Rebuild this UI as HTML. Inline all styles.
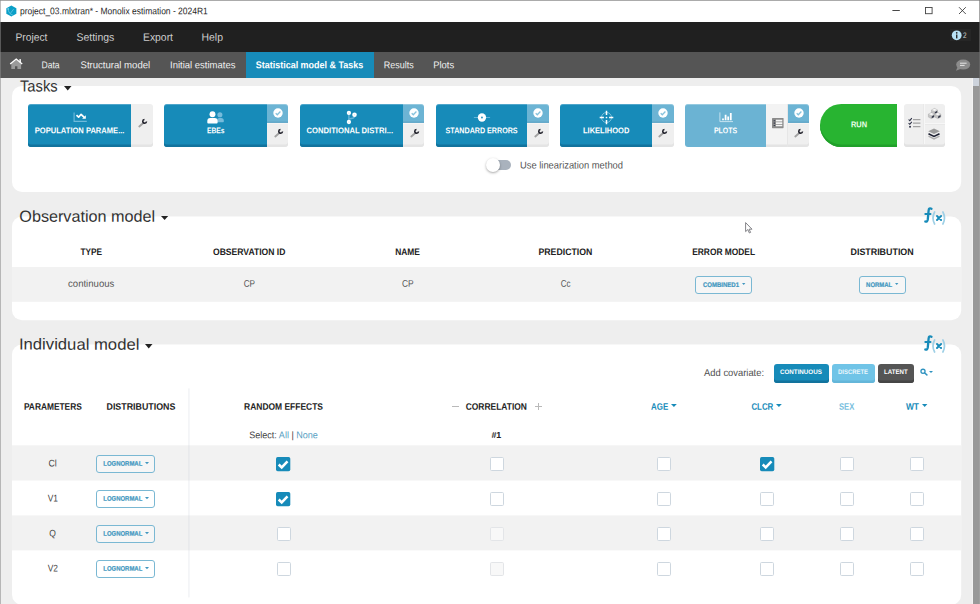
<!DOCTYPE html>
<html lang="en">
<head>
<meta charset="utf-8">
<title>project_03.mlxtran* - Monolix estimation - 2024R1</title>
<style>
*{box-sizing:border-box;margin:0;padding:0}
html,body{width:980px;height:604px;overflow:hidden;background:#eee;font-family:"Liberation Sans",sans-serif}
#app{position:relative;width:980px;height:604px;overflow:hidden;background:#eee}
#app>*{position:absolute}
.t{position:absolute;left:0;top:0;white-space:nowrap;transform-origin:0 0;display:block;line-height:1.2}
.p{display:inline-block;width:0;height:0}
/* window chrome */
.titlebar{left:0;top:0;width:980px;height:22px;background:#fff;border-top:1px solid #ababab}
.menubar{left:0;top:22px;width:980px;height:30px;background:#202020}
.tabbar{left:0;top:52px;width:980px;height:26px;background:#555}
.tab-active{left:246px;top:52px;width:128px;height:26px;background:#178bb9}
.edge-l{left:0;top:0;width:1px;height:604px;background:rgba(136,136,136,.55)}
.edge-r{left:979px;top:0;width:1px;height:604px;background:rgba(110,110,110,.6)}
.sb-top{left:973px;top:78px;width:6px;height:8px;background:#cdd3dc}
.sb-thumb{left:973px;top:86px;width:6px;height:518px;background:#999}
/* cards */
/* task buttons */
.tb{top:104px;height:42.7px;border-radius:3px 0 0 3px;background:#178bb9;box-shadow:inset 0 -2.5px 0 #12739d;border-top:1px solid #4fa6cb}
.side{background:#efefef;box-shadow:inset 0 -2.4px 0 #e4e4e4}
.side.lo{border-top:1px solid #f7f5f4}
.chk{background:#6cb4d4;box-shadow:inset 0 -1.8px 0 #66aaca;border-top:1px solid #93c8df}
.ic{overflow:visible}
.dd{border:1px solid #7ab8d3;border-radius:3px;background:rgba(255,255,255,.35)}
.cb{width:14px;height:14px;border:1px solid #ced7df;border-radius:1.6px;background:#fff}
.cb.on{background:#178bb9;border-color:#178bb9}
.cb.off{border-color:#e3e5e8;background:#f8f8f8}
</style>
</head>
<body>
<div id="app">
  <!-- window chrome -->
  <div class="titlebar"></div>
  <div class="menubar"></div>
  <div class="tabbar"></div>
  <div class="tab-active"></div>

  <!-- app logo -->
  <svg class="ic" style="left:5.8px;top:4.7px" width="10.7" height="12" viewBox="0 0 23 25">
    <polygon points="11.5,0.5 22.3,6.5 22.3,18.5 11.5,24.5 0.7,18.5 0.7,6.5" fill="#0a9fc7"/>
    <path d="M4.5 8 C5 15 8 19 14 21 M9.5 17.5 L16 9" stroke="#8fd8ee" stroke-width="1.2" fill="none" stroke-linecap="round"/><circle cx="4.6" cy="8" r="1.5" fill="#b5e8f6"/>
  </svg>
  <!-- window controls -->
  <svg class="ic" style="left:888px;top:4px" width="84" height="14" viewBox="0 0 84 14">
    <path d="M4.4 6.5 H11.8" stroke="#333" stroke-width="0.9"/>
    <rect x="37.5" y="3.5" width="6.6" height="6.2" fill="none" stroke="#444" stroke-width="0.9"/>
    <path d="M71 3.2 L77.8 10 M77.8 3.2 L71 10" stroke="#333" stroke-width="0.85"/>
  </svg>
  <!-- info badge -->
  <div style="left:950px;top:29px;width:21px;height:12px;background:#262626"></div>
  <svg class="ic" style="left:951px;top:30px" width="12" height="12" viewBox="0 0 12 12">
    <circle cx="5.7" cy="5.3" r="4.9" fill="#b9e2f5"/>
    <rect x="5.05" y="4.5" width="1.35" height="3.9" fill="#222"/><circle cx="5.72" cy="2.8" r="0.85" fill="#222"/>
  </svg>
  <!-- home -->
  <svg class="ic" style="left:9px;top:58.4px" width="15" height="12" viewBox="0 0 15 12">
    <path d="M2.3 5.6 L7.2 1.6 L12.1 5.6 V11.1 H8.4 V8.2 H6 V11.1 H2.3 Z" fill="#9a9a9a"/>
    <path d="M1.2 6 L7.2 1.1 L13.2 6" stroke="#fff" stroke-width="1.35" fill="none" stroke-linejoin="miter"/>
    <rect x="10.4" y="1.1" width="1.5" height="3.2" fill="#fff"/>
  </svg>
  <!-- chat bubble -->
  <svg class="ic" style="left:955px;top:59px" width="16" height="13" viewBox="0 0 16 13">
    <ellipse cx="8.2" cy="5.6" rx="7" ry="5" fill="#8c8c8c"/>
    <path d="M2.5 8 L1 11.8 L6 9.8 Z" fill="#8c8c8c"/>
    <path d="M5 4.2 H11.6" stroke="#e6e6e6" stroke-width="1"/><path d="M5 6.4 H9.6" stroke="#e6e6e6" stroke-width="1"/>
  </svg>

  <!-- cards + striped rows -->
  <svg class="ic" style="left:0;top:0" width="980" height="604" viewBox="0 0 980 604">
    <rect x="12" y="85.9" width="949.2" height="106" rx="10" fill="#fff"/>
    <rect x="12" y="216.5" width="949.2" height="103.8" rx="10" fill="#fff"/>
    <rect x="12" y="344.5" width="949.2" height="260.3" rx="10" fill="#fff"/>
    <rect x="12" y="267" width="949.2" height="34.8" fill="#f2f2f2"/>
    <rect x="12" y="445.3" width="949.2" height="35.2" fill="#f2f2f2"/>
    <rect x="12" y="515.4" width="949.2" height="35" fill="#f2f2f2"/>
    <rect x="188.1" y="388.4" width="1.6" height="209" fill="#c8ccd6" fill-opacity="0.22"/>
  </svg>

  <!-- section carets -->

  <!-- TASK 1: population parameters -->
  <div class="tb" style="left:28px;width:103px"></div>
  <div class="side" style="left:131px;top:104px;width:22px;height:42.6px;border-radius:0 3px 3px 0"></div>
  <svg class="ic" style="left:73px;top:112px" width="15" height="11" viewBox="0 0 15 11">
    <path d="M1.1 0.6 V9.4 H13.8" stroke="#6fbadb" stroke-width="1.1" fill="none"/>
    <path d="M3.5 3.2 L5.6 5.2 L8.1 2.3 L11.2 5.4" stroke="#fff" stroke-width="1.7" fill="none" stroke-linejoin="round"/>
    <path d="M12.8 3.2 V6.8 H9.1 Z" fill="#fff"/>
  </svg>
  <svg class="ic wr" style="left:136.8px;top:118.2px" width="10" height="9" viewBox="0 0 10 9"><path d="M2.3 8.5 L6.6 4.8" stroke="#a2a2a2" stroke-width="1.9" stroke-linecap="round"/> <path d="M9.54 3.47 A1.9 1.9 0 1 1 7.48 1.41" stroke="#1c1c26" stroke-width="1.5" fill="none"/></svg>

  <!-- TASK 2: EBEs -->
  <div class="tb" style="left:164.2px;width:103.1px"></div>
  <div class="chk" style="left:267.3px;top:104px;width:20.5px;height:19px;border-radius:0 3px 0 0"></div>
  <div class="side lo" style="left:267.3px;top:123px;width:20.5px;height:23.6px;border-radius:0 0 3px 0"></div>
  <svg class="ic" style="left:207px;top:111px" width="18" height="13" viewBox="0 0 18 13">
    <circle cx="12.9" cy="3.7" r="2.55" fill="#76bbdb"/><path d="M10 11.2 V9.4 Q10 7.1 12.2 7.1 H14.2 Q16.8 7.1 16.8 9.6 V10.4 Q16.8 11.2 16 11.2 Z" fill="#76bbdb"/>
    <circle cx="5.5" cy="3.3" r="2.95" fill="#fff"/><path d="M0.3 11.6 V10 Q0.3 7.1 3.2 7.1 H7.8 Q10.6 7.1 10.6 10 V11.6 Q10.6 12.5 9.7 12.5 H1.2 Q0.3 12.5 0.3 11.6 Z" fill="#fff"/>
  </svg>
  <svg class="ic" style="left:273px;top:108.2px" width="10" height="10" viewBox="0 0 10 10"><circle cx="5" cy="5" r="4.7" fill="#fff"/> <path d="M2.7 5.2 L4.3 6.8 L7.4 3.5" stroke="#86c2dc" stroke-width="1.25" fill="none"/></svg>
  <svg class="ic wr" style="left:272.8px;top:127.7px" width="10" height="9" viewBox="0 0 10 9"><path d="M2.3 8.5 L6.6 4.8" stroke="#a2a2a2" stroke-width="1.9" stroke-linecap="round"/> <path d="M9.54 3.47 A1.9 1.9 0 1 1 7.48 1.41" stroke="#1c1c26" stroke-width="1.5" fill="none"/></svg>

  <!-- TASK 3: conditional distribution -->
  <div class="tb" style="left:299.8px;width:103.5px"></div>
  <div class="chk" style="left:403.3px;top:104px;width:20.5px;height:19px;border-radius:0 3px 0 0"></div>
  <div class="side lo" style="left:403.3px;top:123px;width:20.5px;height:23.6px;border-radius:0 0 3px 0"></div>
  <svg class="ic" style="left:345px;top:110px" width="13" height="15" viewBox="0 0 13 15">
    <path d="M3.9 3 V12 M9.5 4.8 V6.4 Q9.3 8.6 3.9 8.9" stroke="#62b4d7" stroke-width="1.5" fill="none"/>
    <circle cx="3.9" cy="2.9" r="2.15" fill="#fff"/><circle cx="9.5" cy="4.7" r="2.3" fill="#fff"/><circle cx="3.9" cy="12" r="2.15" fill="#fff"/>
    <circle cx="3.9" cy="2.9" r="0.5" fill="#c4e0ee"/><circle cx="9.5" cy="4.7" r="0.5" fill="#c4e0ee"/><circle cx="3.9" cy="12" r="0.5" fill="#c4e0ee"/>
  </svg>
  <svg class="ic" style="left:409px;top:108.2px" width="10" height="10" viewBox="0 0 10 10"><circle cx="5" cy="5" r="4.7" fill="#fff"/> <path d="M2.7 5.2 L4.3 6.8 L7.4 3.5" stroke="#86c2dc" stroke-width="1.25" fill="none"/></svg>
  <svg class="ic wr" style="left:408.8px;top:127.7px" width="10" height="9" viewBox="0 0 10 9"><path d="M2.3 8.5 L6.6 4.8" stroke="#a2a2a2" stroke-width="1.9" stroke-linecap="round"/> <path d="M9.54 3.47 A1.9 1.9 0 1 1 7.48 1.41" stroke="#1c1c26" stroke-width="1.5" fill="none"/></svg>

  <!-- TASK 4: standard errors -->
  <div class="tb" style="left:435.8px;width:91.5px"></div>
  <div class="chk" style="left:527.3px;top:104px;width:21.4px;height:19px;border-radius:0 3px 0 0"></div>
  <div class="side lo" style="left:527.3px;top:123px;width:21.4px;height:23.6px;border-radius:0 0 3px 0"></div>
  <svg class="ic" style="left:473px;top:113px" width="18" height="9" viewBox="0 0 18 9">
    <path d="M0.9 4.5 H17.1" stroke="#60b3d6" stroke-width="1"/>
    <circle cx="8.95" cy="4.5" r="4.15" fill="#fff"/><circle cx="8.95" cy="4.5" r="1" fill="#2f97c3"/>
  </svg>
  <svg class="ic" style="left:533px;top:108.2px" width="10" height="10" viewBox="0 0 10 10"><circle cx="5" cy="5" r="4.7" fill="#fff"/> <path d="M2.7 5.2 L4.3 6.8 L7.4 3.5" stroke="#86c2dc" stroke-width="1.25" fill="none"/></svg>
  <svg class="ic wr" style="left:532.8px;top:127.7px" width="10" height="9" viewBox="0 0 10 9"><path d="M2.3 8.5 L6.6 4.8" stroke="#a2a2a2" stroke-width="1.9" stroke-linecap="round"/> <path d="M9.54 3.47 A1.9 1.9 0 1 1 7.48 1.41" stroke="#1c1c26" stroke-width="1.5" fill="none"/></svg>

  <!-- TASK 5: likelihood -->
  <div class="tb" style="left:560.1px;width:91.9px"></div>
  <div class="chk" style="left:652px;top:104px;width:21.5px;height:19px;border-radius:0 3px 0 0"></div>
  <div class="side lo" style="left:652px;top:123px;width:21.5px;height:23.6px;border-radius:0 0 3px 0"></div>
  <svg class="ic" style="left:599px;top:110px" width="15" height="15" viewBox="0 0 15 15">
    <circle cx="7.5" cy="7.5" r="5" fill="none" stroke="#7cc0dc" stroke-width="1"/>
    <path d="M7.5 0.7 V4.9 M7.5 10.1 V14.3 M0.7 7.5 H4.9 M10.1 7.5 H14.3" stroke="#fff" stroke-width="1.5"/>
    <circle cx="7.5" cy="7.5" r="0.85" fill="#fff"/>
  </svg>
  <svg class="ic" style="left:658px;top:108.2px" width="10" height="10" viewBox="0 0 10 10"><circle cx="5" cy="5" r="4.7" fill="#fff"/> <path d="M2.7 5.2 L4.3 6.8 L7.4 3.5" stroke="#86c2dc" stroke-width="1.25" fill="none"/></svg>
  <svg class="ic wr" style="left:657.3px;top:127.7px" width="10" height="9" viewBox="0 0 10 9"><path d="M2.3 8.5 L6.6 4.8" stroke="#a2a2a2" stroke-width="1.9" stroke-linecap="round"/> <path d="M9.54 3.47 A1.9 1.9 0 1 1 7.48 1.41" stroke="#1c1c26" stroke-width="1.5" fill="none"/></svg>

  <!-- TASK 6: plots -->
  <div class="tb" style="left:684.8px;width:81.5px;background:#6bb3d3;box-shadow:none;border-top-color:#95cae0"></div>
  <div class="side" style="left:766.3px;top:104px;width:21.5px;height:42.6px;background:#f3f3f3;border-right:1px solid #e6e6e6"></div>
  <div class="chk" style="left:788px;top:104px;width:20.5px;height:19px;border-radius:0 3px 0 0"></div>
  <div class="side lo" style="left:788px;top:123px;width:20.5px;height:23.6px;border-radius:0 0 3px 0"></div>
  <svg class="ic" style="left:719px;top:112px" width="15" height="11" viewBox="0 0 15 11">
    <path d="M0.9 0.4 V9.6 H14" stroke="#cfe8f3" stroke-width="0.9" fill="none"/>
    <path d="M4 6.5 V8.2 M6.6 2.8 V8.2 M9.2 4.4 V8.2 M11.8 1 V8.2" stroke="#fff" stroke-width="1.75"/>
  </svg>
  <svg class="ic" style="left:771.6px;top:117.9px" width="11.6" height="10.2" viewBox="0 0 11.6 10.2">
    <rect x="0" y="0" width="11.6" height="10.2" rx="0.6" fill="#8b8b8b"/>
    <path d="M4 2.7 H10.3 M4 5.1 H10.3 M4 7.5 H10.3" stroke="#f6f6f6" stroke-width="1.7"/>
    <path d="M1.7 2.7 H2.9 M1.7 5.1 H2.9 M1.7 7.5 H2.9" stroke="#2c3045" stroke-width="1.1"/>
  </svg>
  <svg class="ic" style="left:793.5px;top:108.2px" width="10" height="10" viewBox="0 0 10 10"><circle cx="5" cy="5" r="4.7" fill="#fff"/> <path d="M2.7 5.2 L4.3 6.8 L7.4 3.5" stroke="#86c2dc" stroke-width="1.25" fill="none"/></svg>
  <svg class="ic wr" style="left:793.3px;top:127.7px" width="10" height="9" viewBox="0 0 10 9"><path d="M2.3 8.5 L6.6 4.8" stroke="#a2a2a2" stroke-width="1.9" stroke-linecap="round"/> <path d="M9.54 3.47 A1.9 1.9 0 1 1 7.48 1.41" stroke="#1c1c26" stroke-width="1.5" fill="none"/></svg>

  <!-- RUN -->
  <div style="left:820px;top:104px;width:77px;height:42.6px;border-radius:21.3px 0 0 21.3px;background:#28b431;box-shadow:inset 0 -2.6px 0 #20a02a"></div>
  <!-- right tools -->
  <div class="side" style="left:904px;top:104px;width:41.2px;height:42.7px;border-radius:3px;box-shadow:inset 0 -2.5px 0 #e2e2e2"></div>
  <div style="left:923.5px;top:104px;width:1px;height:40.3px;background:#f7f7f7;border-right:0"></div>
  <div style="left:922.7px;top:104px;width:0.8px;height:40.3px;background:#e9e9e9"></div>
  <div style="left:924.5px;top:123.2px;width:20.7px;height:1px;background:#f7f7f7"></div>
  <div style="left:924.5px;top:124.2px;width:20.7px;height:0.8px;background:#e9e9e9"></div>
  <svg class="ic" style="left:907.5px;top:117px" width="13" height="12" viewBox="0 0 13 12">
    <path d="M5 2.6 H12.4 M5 6.2 H12.4 M5 9.7 H12.4" stroke="#a2a2a2" stroke-width="1.2"/>
    <path d="M0.6 2.5 L1.8 3.7 L3.8 1.2 M0.6 6.1 L1.8 7.3 L3.8 4.8" stroke="#2c3045" stroke-width="1.05" fill="none"/><rect x="1.2" y="8.9" width="1.7" height="1.7" fill="#2c3045"/>
  </svg>
  <svg class="ic" style="left:928px;top:107.5px" width="13" height="11" viewBox="0 0 13 11">
    <path d="M6.50 0.40 L9.50 1.90 L9.50 4.90 L6.50 6.40 L3.50 4.90 L3.50 1.90 Z" fill="#c4c4c4" stroke="#a9a9a9" stroke-width="0.5"/><path d="M6.50 0.70 L9.10 1.90 L6.50 3.10 L3.90 1.90 Z" fill="#f7f7f7"/><path d="M6.80 4.30 L9.20 2.80 L9.20 4.70 L6.80 6.00 Z" fill="#343849"/>
    <path d="M3.40 4.60 L6.40 6.10 L6.40 9.10 L3.40 10.60 L0.40 9.10 L0.40 6.10 Z" fill="#c4c4c4" stroke="#a9a9a9" stroke-width="0.5"/><path d="M3.40 4.90 L6.00 6.10 L3.40 7.30 L0.80 6.10 Z" fill="#f7f7f7"/><path d="M3.70 8.50 L6.10 7.00 L6.10 8.90 L3.70 10.20 Z" fill="#343849"/>
    <path d="M9.80 4.60 L12.80 6.10 L12.80 9.10 L9.80 10.60 L6.80 9.10 L6.80 6.10 Z" fill="#c4c4c4" stroke="#a9a9a9" stroke-width="0.5"/><path d="M9.80 4.90 L12.40 6.10 L9.80 7.30 L7.20 6.10 Z" fill="#f7f7f7"/><path d="M10.10 8.50 L12.50 7.00 L12.50 8.90 L10.10 10.20 Z" fill="#343849"/>
  </svg>
  <svg class="ic" style="left:928.3px;top:128px" width="12" height="12" viewBox="0 0 12 12">
    <path d="M0.5 8.2 L6 10.9 L11.5 8.2" stroke="#aeaeae" stroke-width="1.5" fill="none"/>
    <path d="M0.5 5.7 L6 8.4 L11.5 5.7" stroke="#1f2233" stroke-width="1.7" fill="none"/>
    <path d="M6 0.5 L11.8 3.2 L6 5.9 L0.2 3.2 Z" fill="#9b9b9b"/>
  </svg>

  <!-- toggle -->
  <div style="left:487.5px;top:160.3px;width:23.5px;height:9.6px;border-radius:5px;background:#a9b2bd"></div>
  <div style="left:485.5px;top:157.8px;width:14px;height:14px;border-radius:50%;background:#fff;box-shadow:0 1px 2.5px rgba(0,0,0,.35)"></div>

  <!-- observation model -->
  <div class="dd" style="left:695.3px;top:275.6px;width:57px;height:18px"></div>
  <div class="dd" style="left:859px;top:275.6px;width:46.6px;height:18px"></div>
  <svg class="ic" style="left:924px;top:207px" width="23" height="18" viewBox="0 0 23 18"><path d="M7.5 1.7 Q4.9 0.4 4.6 3.6 L3.8 12.4 Q3.4 15.2 1.3 14.5" stroke="#178bb9" stroke-width="2.3" fill="none" stroke-linecap="round"/> <path d="M1.3 6.9 H6.5" stroke="#178bb9" stroke-width="2" stroke-linecap="round"/> <path d="M10.6 5 Q7.4 11 10.6 17 M18.9 5 Q22.1 11 18.9 17" stroke="#9fd0e6" stroke-width="1.7" fill="none" stroke-linecap="round"/> <path d="M13 9 L17.1 13 M17.1 9 L13 13" stroke="#178bb9" stroke-width="1.9" stroke-linecap="round"/></svg>
  <!-- mouse cursor -->
  <svg class="ic" style="left:745px;top:222px" width="8" height="12" viewBox="0 0 8 12">
    <path d="M0.6 0.6 V9.6 L2.8 7.6 L4.4 11 L5.6 10.4 L4.1 7.2 H7 Z" fill="#fff" stroke="#6e6e74" stroke-width="0.85" stroke-linejoin="round"/>
  </svg>

  <!-- individual model -->
    <svg class="ic" style="left:924px;top:335px" width="23" height="18" viewBox="0 0 23 18"><path d="M7.5 1.7 Q4.9 0.4 4.6 3.6 L3.8 12.4 Q3.4 15.2 1.3 14.5" stroke="#178bb9" stroke-width="2.3" fill="none" stroke-linecap="round"/> <path d="M1.3 6.9 H6.5" stroke="#178bb9" stroke-width="2" stroke-linecap="round"/> <path d="M10.6 5 Q7.4 11 10.6 17 M18.9 5 Q22.1 11 18.9 17" stroke="#9fd0e6" stroke-width="1.7" fill="none" stroke-linecap="round"/> <path d="M13 9 L17.1 13 M17.1 9 L13 13" stroke="#178bb9" stroke-width="1.9" stroke-linecap="round"/></svg>

  <!-- covariate buttons -->
  <div style="left:774px;top:364px;width:55px;height:19px;border-radius:3px;background:#178bb9;box-shadow:inset 0 -2.6px 0 #12739d"></div>
  <div style="left:832px;top:364px;width:43.2px;height:19px;border-radius:3px;background:#70c4e7;box-shadow:inset 0 -2.6px 0 #64b6d9"></div>
  <div style="left:878px;top:364px;width:36.1px;height:19px;border-radius:3px;background:#555;box-shadow:inset 0 -2.6px 0 #454545"></div>
  <svg class="ic" style="left:919.5px;top:368px" width="9" height="9" viewBox="0 0 9 9">
    <circle cx="3" cy="3.3" r="2.05" fill="none" stroke="#2f93c0" stroke-width="1.3"/><path d="M4.7 5 L6.9 6.9" stroke="#2f93c0" stroke-width="1.5" stroke-linecap="round"/>
  </svg>
  <!-- header controls -->
  <div style="left:451.5px;top:405.7px;width:7px;height:1px;background:#b9b9b9"></div>
  <div style="left:535px;top:405.7px;width:6.6px;height:1px;background:#b9b9b9"></div>
  <div style="left:537.8px;top:403px;width:1px;height:6.6px;background:#b9b9b9"></div>

  <!-- rows: distribution dropdowns + checkboxes -->
  <div class="dd" style="left:96.3px;top:455.1px;width:59.1px;height:17.6px"></div>
  <svg class="ic" style="left:276.4px;top:456.7px" width="14.3" height="14.3" viewBox="0 0 14.3 14.3"><rect x="0" y="0" width="14.3" height="14.3" rx="1.7" fill="#178bb9"/><path d="M2.7 7.5 L5.7 10.4 L11.5 4.3" stroke="#fff" stroke-width="2.5" fill="none"/></svg>
  <div class="cb" style="left:489.8px;top:456.8px"></div>
  <div class="cb" style="left:656.8px;top:456.8px"></div>
  <svg class="ic" style="left:759.7px;top:456.7px" width="14.3" height="14.3" viewBox="0 0 14.3 14.3"><rect x="0" y="0" width="14.3" height="14.3" rx="1.7" fill="#178bb9"/><path d="M2.7 7.5 L5.7 10.4 L11.5 4.3" stroke="#fff" stroke-width="2.5" fill="none"/></svg>
  <div class="cb" style="left:839.7px;top:456.8px"></div>
  <div class="cb" style="left:910.0px;top:456.8px"></div>
  <div class="dd" style="left:96.3px;top:490.1px;width:59.1px;height:17.6px"></div>
  <svg class="ic" style="left:276.4px;top:491.7px" width="14.3" height="14.3" viewBox="0 0 14.3 14.3"><rect x="0" y="0" width="14.3" height="14.3" rx="1.7" fill="#178bb9"/><path d="M2.7 7.5 L5.7 10.4 L11.5 4.3" stroke="#fff" stroke-width="2.5" fill="none"/></svg>
  <div class="cb" style="left:489.8px;top:491.8px"></div>
  <div class="cb" style="left:656.8px;top:491.8px"></div>
  <div class="cb" style="left:759.8px;top:491.8px"></div>
  <div class="cb" style="left:839.7px;top:491.8px"></div>
  <div class="cb" style="left:910.0px;top:491.8px"></div>
  <div class="dd" style="left:96.3px;top:525.1px;width:59.1px;height:17.6px"></div>
  <div class="cb" style="left:276.5px;top:526.8px"></div>
  <div class="cb off" style="left:489.8px;top:526.8px"></div>
  <div class="cb" style="left:656.8px;top:526.8px"></div>
  <div class="cb" style="left:759.8px;top:526.8px"></div>
  <div class="cb" style="left:839.7px;top:526.8px"></div>
  <div class="cb" style="left:910.0px;top:526.8px"></div>
  <div class="dd" style="left:96.3px;top:560.1px;width:59.1px;height:17.6px"></div>
  <div class="cb" style="left:276.5px;top:561.8px"></div>
  <div class="cb off" style="left:489.8px;top:561.8px"></div>
  <div class="cb" style="left:656.8px;top:561.8px"></div>
  <div class="cb" style="left:759.8px;top:561.8px"></div>
  <div class="cb" style="left:839.7px;top:561.8px"></div>
  <div class="cb" style="left:910.0px;top:561.8px"></div>
  <svg class="ic" style="left:63.50px;top:85.60px" width="7.50" height="4.40" viewBox="0 0 7.50 4.40"><polygon points="0,0 7.50,0 3.75,4.40" fill="#222"/></svg>
  <svg class="ic" style="left:160.50px;top:215.80px" width="7.20" height="4.10" viewBox="0 0 7.20 4.10"><polygon points="0,0 7.20,0 3.60,4.10" fill="#222"/></svg>
  <svg class="ic" style="left:144.50px;top:343.60px" width="7.50" height="4.40" viewBox="0 0 7.50 4.40"><polygon points="0,0 7.50,0 3.75,4.40" fill="#222"/></svg>
  <svg class="ic" style="left:741.80px;top:283.00px" width="3.40" height="1.90" viewBox="0 0 3.40 1.90"><polygon points="0,0 3.40,0 1.70,1.90" fill="#4297c0"/></svg>
  <svg class="ic" style="left:894.80px;top:283.00px" width="3.40" height="1.90" viewBox="0 0 3.40 1.90"><polygon points="0,0 3.40,0 1.70,1.90" fill="#4297c0"/></svg>
  <svg class="ic" style="left:670.80px;top:404.20px" width="5.80" height="3.10" viewBox="0 0 5.80 3.10"><polygon points="0,0 5.80,0 2.90,3.10" fill="#178bb9"/></svg>
  <svg class="ic" style="left:776.00px;top:404.20px" width="5.80" height="3.10" viewBox="0 0 5.80 3.10"><polygon points="0,0 5.80,0 2.90,3.10" fill="#178bb9"/></svg>
  <svg class="ic" style="left:922.10px;top:404.20px" width="5.40" height="3.10" viewBox="0 0 5.40 3.10"><polygon points="0,0 5.40,0 2.70,3.10" fill="#178bb9"/></svg>
  <svg class="ic" style="left:929.00px;top:370.90px" width="4.00" height="2.10" viewBox="0 0 4.00 2.10"><polygon points="0,0 4.00,0 2.00,2.10" fill="#2f93c0"/></svg>
  <svg class="ic" style="left:144.80px;top:462.10px" width="4.00" height="2.20" viewBox="0 0 4.00 2.20"><polygon points="0,0 4.00,0 2.00,2.20" fill="#4297c0"/></svg>
  <svg class="ic" style="left:144.80px;top:497.10px" width="4.00" height="2.20" viewBox="0 0 4.00 2.20"><polygon points="0,0 4.00,0 2.00,2.20" fill="#4297c0"/></svg>
  <svg class="ic" style="left:144.80px;top:532.10px" width="4.00" height="2.20" viewBox="0 0 4.00 2.20"><polygon points="0,0 4.00,0 2.00,2.20" fill="#4297c0"/></svg>
  <svg class="ic" style="left:144.80px;top:567.10px" width="4.00" height="2.20" viewBox="0 0 4.00 2.20"><polygon points="0,0 4.00,0 2.00,2.20" fill="#4297c0"/></svg>

  <div style="left:972px;top:78px;width:1px;height:526px;background:#f4f4f4"></div>
  <div class="sb-top"></div>
  <div class="sb-thumb"></div>
  <div class="edge-l"></div>
  <div class="edge-r"></div>

  <span class="t" id="t0" style="font-size:9.50px;font-weight:400;color:#262626;transform:matrix(0.8912,0.00055,-0.00055,1,20.00,5.20)">project_03.mlxtran* - Monolix estimation - 2024R1</span>
  <span class="t" id="t1" style="font-size:10.70px;font-weight:400;color:#cdcdcd;transform:matrix(0.9612,0.00055,-0.00055,1,15.50,30.80)">Project</span>
  <span class="t" id="t2" style="font-size:10.70px;font-weight:400;color:#cdcdcd;transform:matrix(0.9798,0.00055,-0.00055,1,76.50,30.80)">Settings</span>
  <span class="t" id="t3" style="font-size:10.70px;font-weight:400;color:#cdcdcd;transform:matrix(0.9703,0.00055,-0.00055,1,143.00,30.80)">Export</span>
  <span class="t" id="t4" style="font-size:10.70px;font-weight:400;color:#cdcdcd;transform:matrix(0.9757,0.00055,-0.00055,1,201.50,30.80)">Help</span>
  <span class="t" id="t5" style="font-size:9.90px;font-weight:400;color:#f0f0f0;transform:matrix(0.8658,0.00055,-0.00055,1,41.50,59.20)">Data</span>
  <span class="t" id="t6" style="font-size:9.90px;font-weight:400;color:#f0f0f0;transform:matrix(0.9693,0.00055,-0.00055,1,80.50,59.20)">Structural model</span>
  <span class="t" id="t7" style="font-size:9.90px;font-weight:400;color:#f0f0f0;transform:matrix(0.9616,0.00055,-0.00055,1,170.00,59.20)">Initial estimates</span>
  <span class="t" id="t8" style="font-size:9.90px;font-weight:700;color:#fff;transform:matrix(0.9086,0.00055,-0.00055,1,255.75,59.20)">Statistical model &amp; Tasks</span>
  <span class="t" id="t9" style="font-size:9.90px;font-weight:400;color:#f0f0f0;transform:matrix(0.9094,0.00055,-0.00055,1,383.75,59.20)">Results</span>
  <span class="t" id="t10" style="font-size:9.90px;font-weight:400;color:#f0f0f0;transform:matrix(0.9538,0.00055,-0.00055,1,433.25,59.20)">Plots</span>
  <span class="t" id="t11" style="font-size:16.00px;font-weight:400;color:#333;transform:matrix(0.9194,0.00055,-0.00055,1,20.00,76.60)">Tasks</span>
  <span class="t" id="t12" style="font-size:16.00px;font-weight:400;color:#333;transform:matrix(1.0117,0.00055,-0.00055,1,19.30,206.80)">Observation model</span>
  <span class="t" id="t13" style="font-size:16.00px;font-weight:400;color:#333;transform:matrix(1.0415,0.00055,-0.00055,1,18.96,334.60)">Individual model</span>
  <span class="t" id="t14" style="font-size:8.20px;font-weight:700;color:#fff;transform:matrix(0.9239,0.00055,-0.00055,1,34.80,126.25)">POPULATION PARAME...</span>
  <span class="t" id="t15" style="font-size:8.20px;font-weight:700;color:#fff;transform:matrix(0.8244,0.00055,-0.00055,1,207.00,126.25)">EBEs</span>
  <span class="t" id="t16" style="font-size:8.20px;font-weight:700;color:#fff;transform:matrix(0.9339,0.00055,-0.00055,1,306.50,126.25)">CONDITIONAL DISTRI...</span>
  <span class="t" id="t17" style="font-size:8.20px;font-weight:700;color:#fff;transform:matrix(0.8717,0.00055,-0.00055,1,445.60,126.25)">STANDARD ERRORS</span>
  <span class="t" id="t18" style="font-size:8.20px;font-weight:700;color:#fff;transform:matrix(0.9174,0.00055,-0.00055,1,583.00,126.25)">LIKELIHOOD</span>
  <span class="t" id="t19" style="font-size:8.20px;font-weight:700;color:#fff;transform:matrix(0.8444,0.00055,-0.00055,1,714.00,126.25)">PLOTS</span>
  <span class="t" id="t20" style="font-size:8.40px;font-weight:700;color:#eaffea;transform:matrix(0.8897,0.00055,-0.00055,1,850.90,119.30)">RUN</span>
  <span class="t" id="t21" style="font-size:10.00px;font-weight:400;color:#555;transform:matrix(0.9361,0.00055,-0.00055,1,520.00,159.50)">Use linearization method</span>
  <span class="t" id="t22" style="font-size:9.40px;font-weight:700;color:#222;transform:matrix(0.8831,0.00055,-0.00055,1,80.50,246.00)">TYPE</span>
  <span class="t" id="t23" style="font-size:9.40px;font-weight:700;color:#222;transform:matrix(0.9143,0.00055,-0.00055,1,213.00,246.00)">OBSERVATION ID</span>
  <span class="t" id="t24" style="font-size:9.40px;font-weight:700;color:#222;transform:matrix(0.8958,0.00055,-0.00055,1,395.20,246.00)">NAME</span>
  <span class="t" id="t25" style="font-size:9.40px;font-weight:700;color:#222;transform:matrix(0.9303,0.00055,-0.00055,1,538.50,246.00)">PREDICTION</span>
  <span class="t" id="t26" style="font-size:9.40px;font-weight:700;color:#222;transform:matrix(0.8939,0.00055,-0.00055,1,692.20,246.00)">ERROR MODEL</span>
  <span class="t" id="t27" style="font-size:9.40px;font-weight:700;color:#222;transform:matrix(0.9478,0.00055,-0.00055,1,850.50,246.00)">DISTRIBUTION</span>
  <span class="t" id="t28" style="font-size:9.60px;font-weight:400;color:#555;transform:matrix(0.9998,0.00055,-0.00055,1,68.00,277.80)">continuous</span>
  <span class="t" id="t29" style="font-size:9.60px;font-weight:400;color:#555;transform:matrix(0.8508,0.00055,-0.00055,1,243.70,277.80)">CP</span>
  <span class="t" id="t30" style="font-size:9.60px;font-weight:400;color:#555;transform:matrix(0.8741,0.00055,-0.00055,1,401.90,277.80)">CP</span>
  <span class="t" id="t31" style="font-size:9.60px;font-weight:400;color:#555;transform:matrix(0.8383,0.00055,-0.00055,1,560.80,277.80)">Cc</span>
  <span class="t" id="t32" style="font-size:6.70px;font-weight:700;color:#4297c0;-webkit-text-stroke:0.22px;transform:matrix(0.8983,0.00055,-0.00055,1,703.00,280.90)">COMBINED1</span>
  <span class="t" id="t33" style="font-size:6.70px;font-weight:700;color:#4297c0;-webkit-text-stroke:0.22px;transform:matrix(0.8886,0.00055,-0.00055,1,866.10,280.90)">NORMAL</span>
  <span class="t" id="t34" style="font-size:9.40px;font-weight:700;color:#222;transform:matrix(0.8921,0.00055,-0.00055,1,23.90,400.80)">PARAMETERS</span>
  <span class="t" id="t35" style="font-size:9.40px;font-weight:700;color:#222;transform:matrix(0.9441,0.00055,-0.00055,1,106.50,400.80)">DISTRIBUTIONS</span>
  <span class="t" id="t36" style="font-size:9.40px;font-weight:700;color:#222;transform:matrix(0.9009,0.00055,-0.00055,1,244.10,400.80)">RANDOM EFFECTS</span>
  <span class="t" id="t37" style="font-size:9.40px;font-weight:700;color:#222;transform:matrix(0.8992,0.00055,-0.00055,1,465.70,400.80)">CORRELATION</span>
  <span class="t" id="t38" style="font-size:9.40px;font-weight:700;color:#178bb9;transform:matrix(0.8474,0.00055,-0.00055,1,651.00,400.80)">AGE</span>
  <span class="t" id="t39" style="font-size:9.40px;font-weight:700;color:#178bb9;transform:matrix(0.8414,0.00055,-0.00055,1,751.40,400.80)">CLCR</span>
  <span class="t" id="t40" style="font-size:9.40px;font-weight:700;color:#78c0de;transform:matrix(0.8151,0.00055,-0.00055,1,839.00,400.80)">SEX</span>
  <span class="t" id="t41" style="font-size:9.40px;font-weight:700;color:#178bb9;transform:matrix(0.8957,0.00055,-0.00055,1,905.90,400.80)">WT</span>
  <span class="t" id="t42" style="font-size:10.00px;font-weight:400;color:#505050;transform:matrix(0.9375,0.00055,-0.00055,1,704.10,366.90)">Add covariate:</span>
  <span class="t" id="t43" style="font-size:6.60px;font-weight:700;color:#fff;transform:matrix(0.9438,0.00055,-0.00055,1,780.00,368.10)">CONTINUOUS</span>
  <span class="t" id="t44" style="font-size:6.60px;font-weight:700;color:#e8f6fc;transform:matrix(0.9016,0.00055,-0.00055,1,838.00,368.10)">DISCRETE</span>
  <span class="t" id="t45" style="font-size:6.60px;font-weight:700;color:#fff;transform:matrix(0.9260,0.00055,-0.00055,1,884.00,368.10)">LATENT</span>
  <span class="t" id="t46" style="font-size:9.70px;font-weight:400;color:#444;transform:matrix(0.9330,0.00055,-0.00055,1,249.20,429.30)">Select: <span style="color:#5a9fc3">All</span> | <span style="color:#5a9fc3">None</span></span>
  <span class="t" id="t47" style="font-size:8.80px;font-weight:700;color:#222;transform:matrix(1.0109,0.00055,-0.00055,1,491.40,430.00)">#1</span>
  <span class="t" id="t48" style="font-size:9.70px;font-weight:400;color:#444;transform:matrix(0.9004,0.00055,-0.00055,1,48.40,457.60)">Cl</span>
  <span class="t" id="t49" style="font-size:6.70px;font-weight:700;color:#4297c0;-webkit-text-stroke:0.22px;transform:matrix(0.8892,0.00055,-0.00055,1,103.30,459.80)">LOGNORMAL</span>
  <span class="t" id="t50" style="font-size:9.70px;font-weight:400;color:#444;transform:matrix(0.8638,0.00055,-0.00055,1,47.70,492.60)">V1</span>
  <span class="t" id="t51" style="font-size:6.70px;font-weight:700;color:#4297c0;-webkit-text-stroke:0.22px;transform:matrix(0.8892,0.00055,-0.00055,1,103.30,494.80)">LOGNORMAL</span>
  <span class="t" id="t52" style="font-size:9.70px;font-weight:400;color:#444;transform:matrix(0.8750,0.00055,-0.00055,1,49.30,527.60)">Q</span>
  <span class="t" id="t53" style="font-size:6.70px;font-weight:700;color:#4297c0;-webkit-text-stroke:0.22px;transform:matrix(0.8892,0.00055,-0.00055,1,103.30,529.80)">LOGNORMAL</span>
  <span class="t" id="t54" style="font-size:9.70px;font-weight:400;color:#444;transform:matrix(0.8638,0.00055,-0.00055,1,47.70,562.60)">V2</span>
  <span class="t" id="t55" style="font-size:6.70px;font-weight:700;color:#4297c0;-webkit-text-stroke:0.22px;transform:matrix(0.8892,0.00055,-0.00055,1,103.30,564.80)">LOGNORMAL</span>
  <span class="t" id="t56" style="font-size:8.00px;font-weight:400;color:#d2d2d2;transform:matrix(0.8000,0.00055,-0.00055,1,963.00,31.00)">2</span>
</div>
</body>
</html>
